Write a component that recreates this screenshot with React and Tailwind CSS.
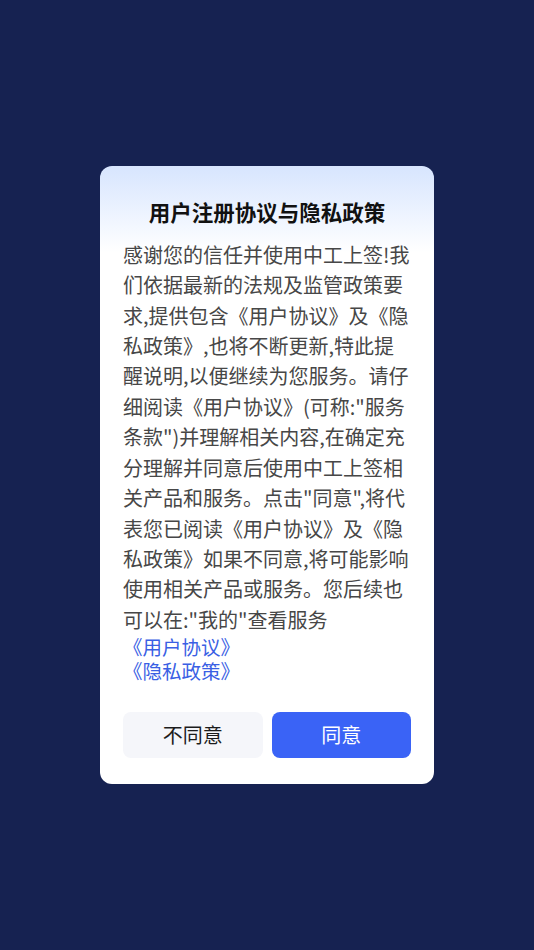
export default function App() {
  return (
    <div
      className="min-h-[950px] w-full bg-[#162251] flex items-center justify-center"
      style={{ fontFamily: '"Noto Sans CJK SC", "Noto Sans", sans-serif' }}
    >
      <div className="w-[334px] rounded-[12px] bg-gradient-to-b from-[#d7e5fe] via-white via-[14%] to-white px-[23px] pt-[31px] pb-[26px]">
        <h1 className="text-center text-[21.5px] leading-[30px] font-bold text-[#111]">
          用户注册协议与隐私政策
        </h1>
        <p className="mt-[13px] text-[20px] leading-[30.4px] text-[#474747]">
          感谢您的信任并使用中工上签!我们依据最新的法规及监管政策要求,提供包含《用户协议》及《隐私政策》,也将不断更新,特此提醒说明,以便继续为您服务。请仔细阅读《用户协议》(可称:"服务条款")并理解相关内容,在确定充分理解并同意后使用中工上签相关产品和服务。点击"同意",将代表您已阅读《用户协议》及《隐私政策》如果不同意,将可能影响使用相关产品或服务。您后续也可以在:"我的"查看服务
        </p>
        <div className="flex flex-col items-start text-[19.5px] leading-[24px] text-[#3a5fe4]">
          <a>《用户协议》</a>
          <a>《隐私政策》</a>
        </div>
        <div className="mt-[29px] flex gap-[9px]">
          <button className="h-[46px] flex-1 rounded-[8px] bg-[#f5f6fa] text-[20px] text-[#1c1c1c]">
            不同意
          </button>
          <button className="h-[46px] flex-1 rounded-[8px] bg-[#3a63f6] text-[20px] text-white">
            同意
          </button>
        </div>
      </div>
    </div>
  );
}
